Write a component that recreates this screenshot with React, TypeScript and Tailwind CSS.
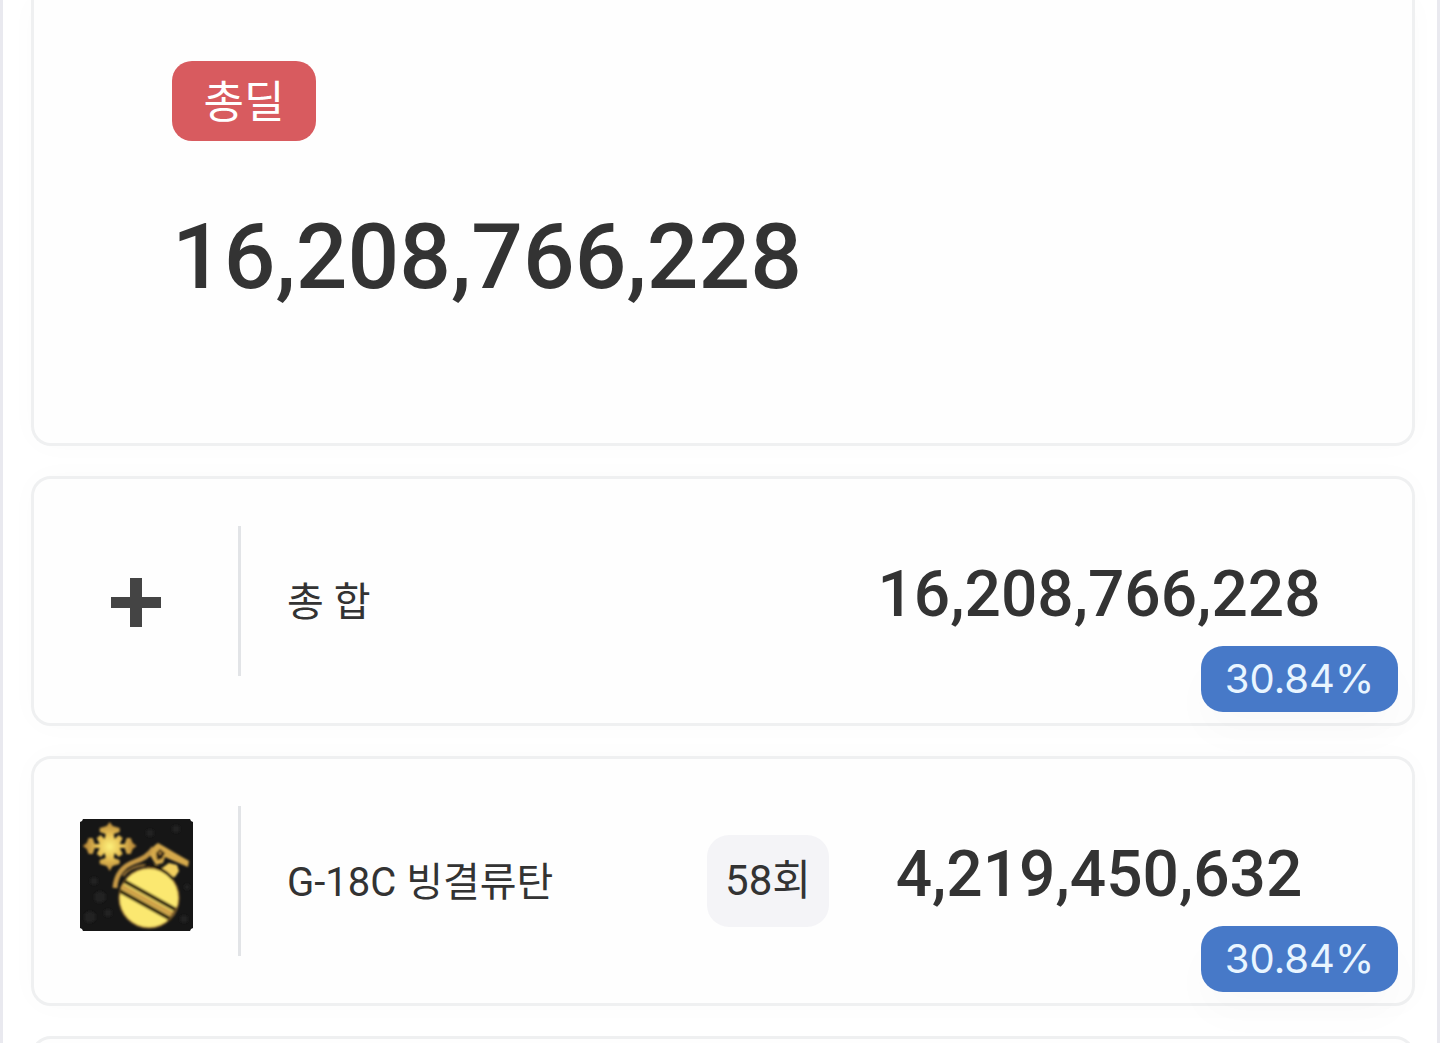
import type { ReactNode } from "react";

function PlusIcon() {
  return (
    <svg viewBox="0 0 50 50" className="mt-1 size-[50px]" fill="#444444" aria-hidden="true">
      <path d="M19 0h12v19h19v11H31v19H19V30H0V19h19z" />
    </svg>
  );
}

function GrenadeIcon() {
  return (
    <svg viewBox="0 0 113 113" className="mb-3 size-[113px]" role="img" aria-label="G-18C 빙결류탄">
      <defs>
        <filter id="soft" x="-5%" y="-5%" width="110%" height="110%">
          <feGaussianBlur stdDeviation="1.2" />
        </filter>
        <radialGradient id="flake" cx="29.7" cy="27.5" r="26" gradientUnits="userSpaceOnUse">
          <stop offset="0" stopColor="#fdf07c" />
          <stop offset="0.45" stopColor="#e8c255" />
          <stop offset="1" stopColor="#b08036" />
        </radialGradient>
        <clipPath id="ball">
          <circle cx="69" cy="79" r="30" />
        </clipPath>
      </defs>
      <path d="M3 0h107l1 2 2 1v106l-2 1-1 2H3l-1-2-2-1V3l2-1z" fill="#161616" />
      <g filter="url(#soft)">
        <g fill="#202020">
          <circle cx="96" cy="10" r="4" />
          <circle cx="70" cy="14" r="4" />
          <circle cx="14" cy="62" r="4" />
          <circle cx="20" cy="78" r="6" />
          <circle cx="10" cy="98" r="6" />
          <circle cx="28" cy="94" r="4" />
          <circle cx="104" cy="100" r="4" />
          <circle cx="107" cy="68" r="3" />
        </g>
        <g fill="url(#flake)">
          <path d="M29.7 3l3 4 7 2v4l-6 2 1 5 4-4 4 3-3 6 5 0 2-6h4l2 5 4 3-4 3-2 5h-4l-2-6-5 0 3 6-4 3-4-4-1 5 6 2v4l-7 2-3 5-3-5-7-2v-4l6-2-1-5-4 4-4-3 3-6-5 0-2 6h-4l-2-5-4-3 4-3 2-5h4l2 6 5 0-3-6 4-3 4 4 1-5-6-2V9l7-2z" />
        </g>
        <path d="M35 69c1-14 8-22 19-26 9-3 14-6 20-14" fill="none" stroke="#c49745" strokeWidth="5" />
        <path d="M43 57c5-7 12-10 22-11" fill="none" stroke="#8d6a31" strokeWidth="2.5" />
        <path d="M70 36l4-9 4-3 7 4 10 6 14 8-1 6-14-6-9-4-2 6-7 2z" fill="#d5a94b" />
        <path d="M76 34l4-4 5 4-3 6-5 1z" fill="#2c2214" />
        <circle cx="80" cy="34" r="1.8" fill="#a47a38" />
        <path d="M82 49l7-5 8 2 2 6-4 6-6-1-7-4z" fill="#f1cf5e" />
        <circle cx="69" cy="79" r="30.5" fill="#a77f38" />
        <circle cx="69" cy="79" r="29" fill="#fbe86f" />
        <g clipPath="url(#ball)" fill="none">
          <path d="M44 62l54 30" stroke="#32270f" strokeWidth="4" />
          <path d="M41 67l56 31" stroke="#cfa349" strokeWidth="5" />
          <path d="M38 71l56 31" stroke="#32270f" strokeWidth="4" />
          <path d="M96 88l4 3-10 16-4-3z" fill="#6d5125" />
        </g>
        <path d="M66 46c11 1 20 6 27 14" fill="none" stroke="#1c170f" strokeWidth="3" />
      </g>
    </svg>
  );
}

type SkillRowProps = {
  icon: ReactNode;
  name: string;
  count?: string;
  damage: string;
  share: string;
};

function SkillRow({ icon, name, count, damage, share }: SkillRowProps) {
  return (
    <li className="relative flex h-[250px] items-center rounded-[20px] border-3 border-[#eff0f1] bg-[#fefefe] shadow-[0_0_30px_rgba(0,0,0,0.02)]">
      <div className="flex w-[204px] shrink-0 items-center justify-center">{icon}</div>
      <div className="h-[150px] w-[3px] shrink-0 bg-[#e2e4e7]" />
      <h2 className="min-w-0 flex-1 pt-1 pl-[46px] text-[40px] leading-[60px] whitespace-nowrap">{name}</h2>
      {count && (
        <span className="flex h-[92px] w-[122px] shrink-0 items-center justify-center rounded-[22px] bg-[#f4f4f7] text-[42px] leading-[60px]">
          {count}
        </span>
      )}
      <p className="mr-[43px] w-[540px] shrink-0 pb-3 text-center text-[64px] leading-[72px] font-medium">
        {damage}
      </p>
      <span className="absolute right-3.5 bottom-[11px] flex h-[66px] w-[197px] items-center justify-center rounded-[22px] bg-[#4779c8] font-['Inter',sans-serif] text-[40px] leading-[48px] text-[#e9f5ff] shadow-[0_24px_40px_rgba(0,0,0,0.02)]">
        {share}
      </span>
    </li>
  );
}

export default function App() {
  return (
    <main className="h-screen overflow-hidden border-x-3 border-[#e9e9ef] bg-white pr-[22px] pl-7 font-['Roboto','Noto_Sans_CJK_KR',sans-serif] text-[#333333]">
      <section className="rounded-b-[20px] border-3 border-t-0 border-[#eff0f1] bg-[#fefefe] px-[138px] pt-[61px] pb-[138px] shadow-[0_0_30px_rgba(0,0,0,0.02)]">
        <h1 className="flex h-20 w-36 items-center justify-center rounded-[20px] bg-[#d85b5f] pt-1 text-[44px] leading-[60px] text-white">
          총딜
        </h1>
        <p className="mt-[68px] text-[91px] leading-[96px] font-medium">16,208,766,228</p>
      </section>
      <ul className="mt-[30px] flex flex-col gap-[30px]">
        <SkillRow icon={<PlusIcon />} name="총 합" damage="16,208,766,228" share="30.84%" />
        <SkillRow
          icon={<GrenadeIcon />}
          name="G-18C 빙결류탄"
          count="58회"
          damage="4,219,450,632"
          share="30.84%"
        />
        <li className="h-[250px] rounded-[20px] border-3 border-[#eff0f1] bg-[#fefefe]" />
      </ul>
    </main>
  );
}
